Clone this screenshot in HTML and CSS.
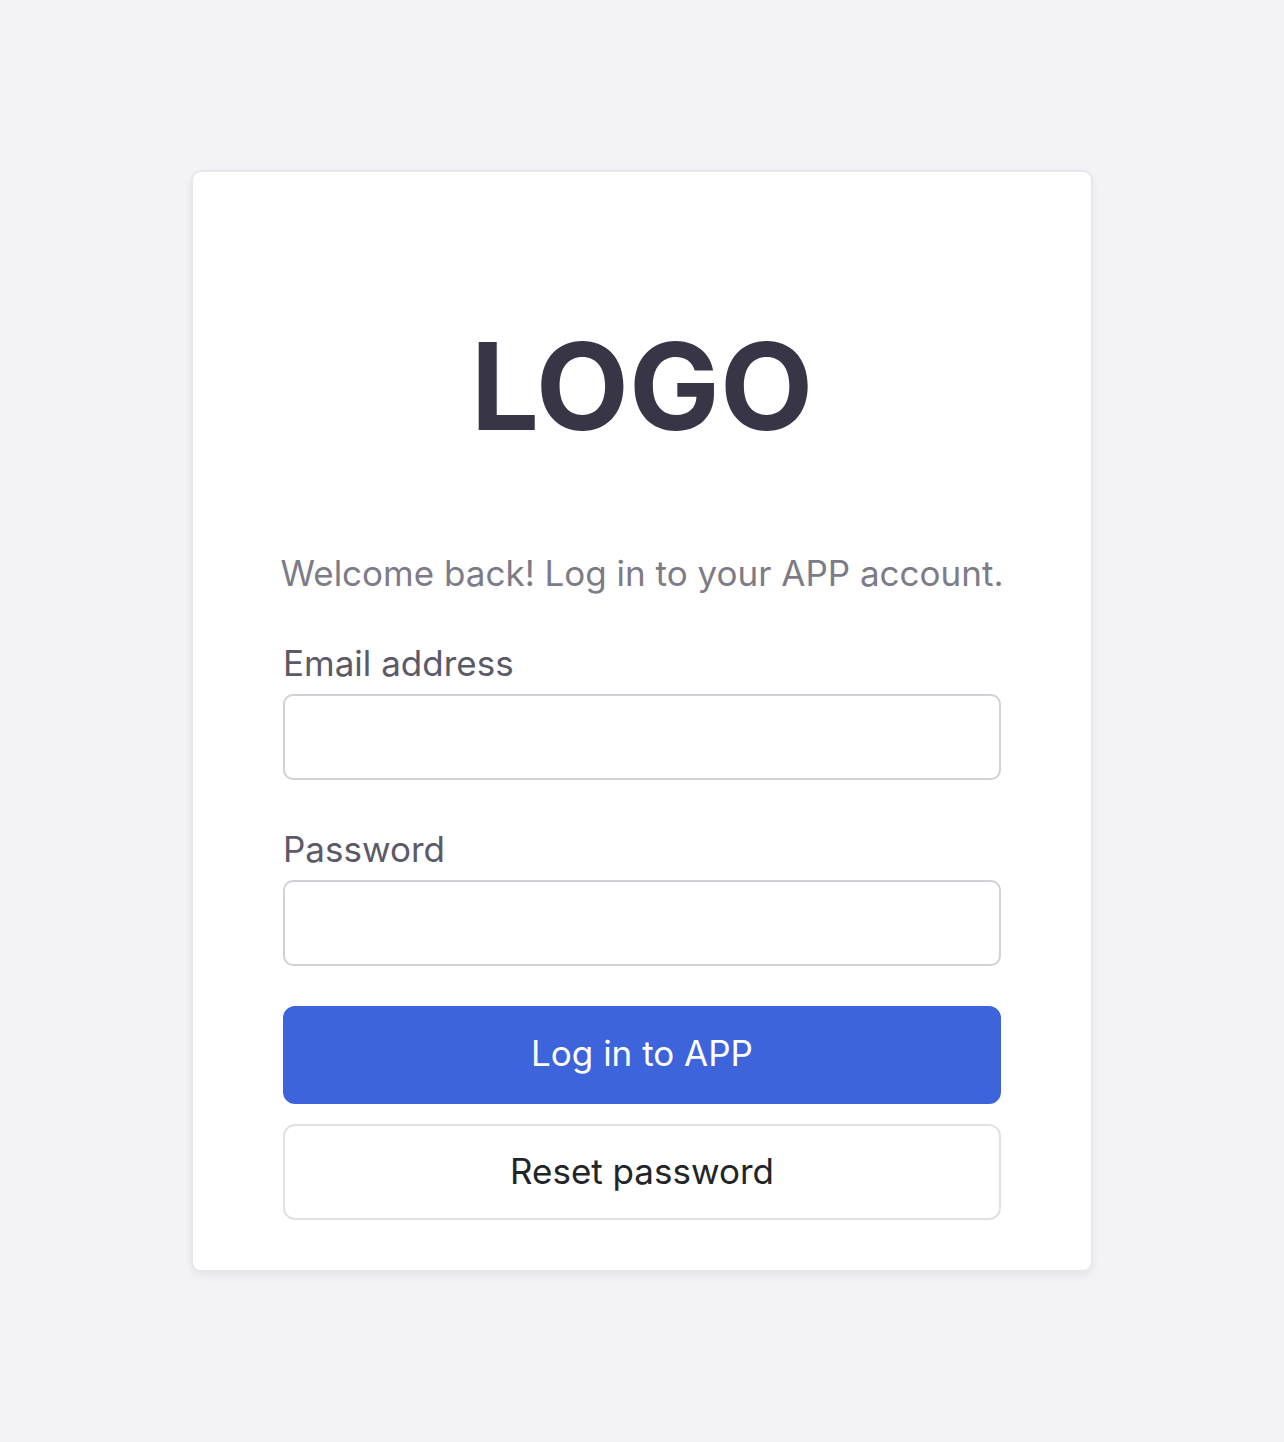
FILE: index.html
```html
<!DOCTYPE html>
<html lang="en">
<head>
<meta charset="utf-8">
<meta name="viewport" content="width=device-width, initial-scale=1">
<title>Log in to APP</title>
<link rel="stylesheet" href="styles.css">
</head>
<body>
<main class="card">
  <h1 class="logo">LOGO</h1>
  <p class="intro">Welcome back! Log in to your APP account.</p>
  <form class="form">
    <div class="fields">
      <div class="field">
        <label class="label" for="email">Email address</label>
        <input class="input" id="email" type="email" autocomplete="email">
      </div>
      <div class="field">
        <label class="label" for="password">Password</label>
        <input class="input" id="password" type="password" autocomplete="current-password">
      </div>
    </div>
    <div class="actions">
      <button class="button button-primary" type="submit">Log in to APP</button>
      <button class="button button-secondary" type="button">Reset password</button>
    </div>
  </form>
</main>
</body>
</html>
```
FILE: styles.css
```css
* {
  box-sizing: border-box;
}

body {
  margin: 0;
  min-height: 100vh;
  display: flex;
  align-items: center;
  justify-content: center;
  background: #f2f2f7;
  font-family: Inter, "Liberation Sans", sans-serif;
  font-size: 35px;
  line-height: 54px;
}

.card {
  width: 100%;
  max-width: 902px;
  padding: 130px 90px 50px;
  background: #fff;
  border: 2px solid #e6e6eb;
  border-radius: 10px;
  box-shadow: 0 4px 8px rgba(0, 0, 0, 0.06);
}

.logo {
  margin: 0 0 76px;
  color: #383547;
  font-size: 121px;
  font-weight: 700;
  line-height: 168px;
  text-align: center;
}

.intro {
  margin: 0 -10px 36px;
  color: #7e7b89;
  text-align: center;
}

.form {
  display: flex;
  flex-direction: column;
  gap: 40px;
}

.fields {
  display: flex;
  flex-direction: column;
  gap: 42px;
}

.field {
  display: flex;
  flex-direction: column;
  gap: 4px;
}

.label {
  color: #5c5968;
}

.input {
  width: 100%;
  height: 86px;
  padding: 0 24px;
  border: 2px solid #ced2d6;
  border-radius: 10px;
  background: #fff;
  color: #212529;
  font: inherit;
}

.actions {
  display: flex;
  flex-direction: column;
  gap: 20px;
}

.button {
  padding: 18px 24px 20px;
  border: 2px solid #dee2e6;
  border-radius: 12px;
  font: inherit;
  cursor: pointer;
}

.button-primary {
  padding-bottom: 22px;
  border-color: #3d64db;
  background: #3d64db;
  color: #fff;
}

.button-secondary {
  background: #fff;
  color: #212529;
}
```
